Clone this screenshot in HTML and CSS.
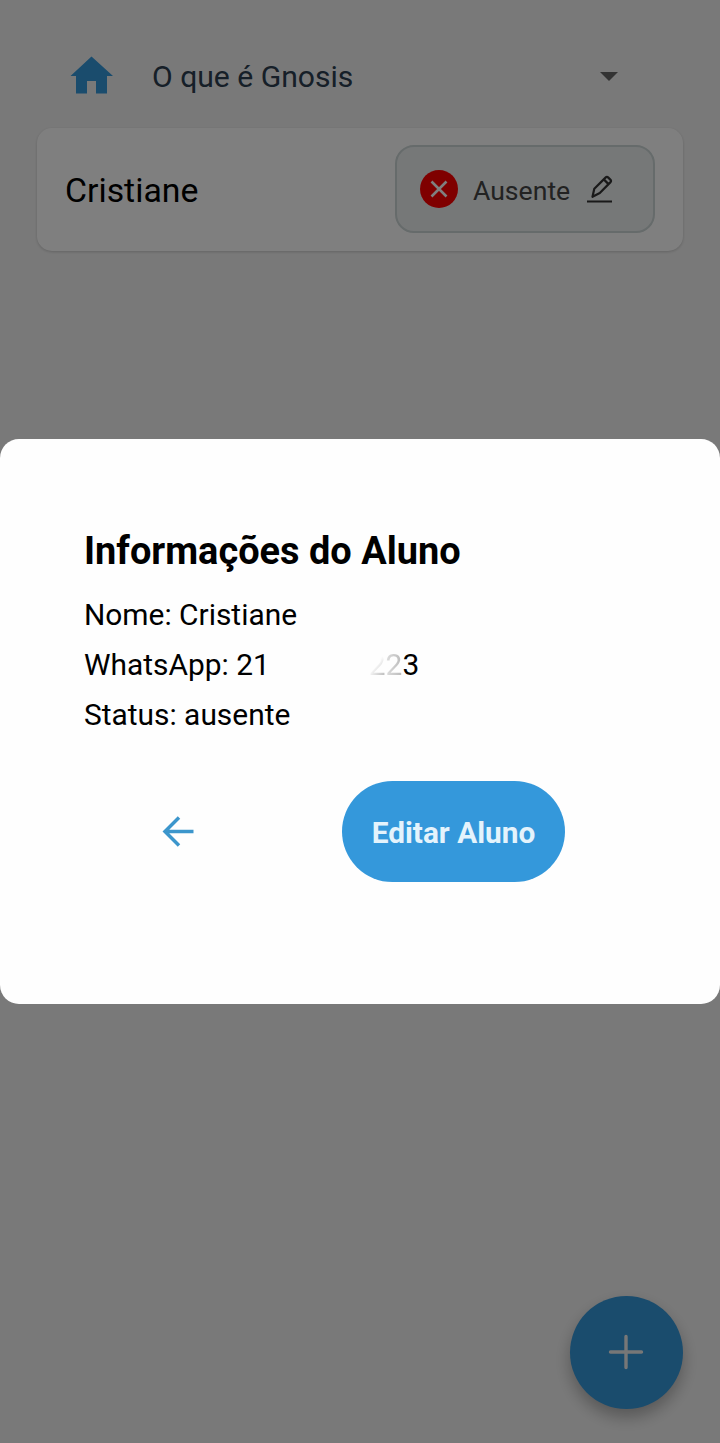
FILE: index.html
```html
<!DOCTYPE html>
<html lang="pt-BR">
<head>
<meta charset="utf-8">
<title>Informações do Aluno</title>
<link rel="stylesheet" href="styles.css">
</head>
<body>
<div class="screen">
  <header class="topbar">
    <svg class="home" viewBox="0 0 44 40"><path d="M21.500.5.500 20H6v17.500h11V25h9v12.500h11V20h6z"/></svg>
    <span class="course">O que é Gnosis</span>
    <svg class="caret" viewBox="0 0 18 9"><path d="M0 0h18L9 9z"/></svg>
  </header>
  <main class="card">
    <span class="student">Cristiane</span>
    <button class="status">
      <svg class="absent" viewBox="0 0 38 38"><circle cx="19" cy="19" r="19"/><path d="m11.500 11.500 15 15m0-15-15 15"/></svg>
      <span class="status-text">Ausente</span>
      <svg class="edit" viewBox="0 0 28 28"><path d="M1 26.500h25M6.500 21.800l1.800-8L19.500 2.600q1.400-1.400 2.800 0l2 2q1.400 1.400 0 2.800L13.800 18zM17.800 4.400l4.700 4.700"/></svg>
    </button>
  </main>
  <button class="add" aria-label="Adicionar">
    <svg viewBox="0 0 36 36"><path d="M2.500 18h31M18 2.500v31"/></svg>
  </button>
</div>
<div class="overlay">
  <section class="dialog">
    <h1 class="title">Informações do Aluno</h1>
    <p class="row">Nome: Cristiane</p>
    <p class="row">WhatsApp: 21<span class="masked"></span><span class="trace">2</span><span class="faded">2</span>3</p>
    <p class="row">Status: ausente</p>
    <div class="actions">
      <button class="back" aria-label="Voltar">
        <svg viewBox="0 0 32 32"><path d="M31.500 15.500H3M17 1.500l-14 14 14 14"/></svg>
      </button>
      <button class="primary">Editar Aluno</button>
    </div>
  </section>
</div>
</body>
</html>
```

FILE: styles.css
```css
* { box-sizing: border-box; }
body { margin: 0; font-family: Roboto, sans-serif; }
button { font: inherit; border: 0; padding: 0; margin: 0; }
svg { display: block; flex: none; }
.screen {
  position: relative;
  height: 1443px;
  padding: 25px 37px;
  background: #f3f3f3;
}
.topbar {
  display: flex;
  align-items: center;
  height: 103px;
  padding: 0 65px 1px 33px;
}
.home { width: 44px; height: 40px; fill: #3498db; }
.course { margin-left: 38px; font-size: 30.100px; color: #2c3e50; }
.caret { width: 18px; height: 9px; margin-left: auto; fill: #666; }
.card {
  display: flex;
  align-items: center;
  justify-content: space-between;
  height: 123px;
  padding: 0 28px 1px;
  border-radius: 15px;
  background: #fff;
  box-shadow: 0 1px 3px rgba(0, 0, 0, .18);
}
.student { font-size: 33.8px; color: #000; padding-top: 3px; }
.status {
  display: flex;
  align-items: center;
  width: 260px;
  height: 88px;
  padding: 0 23px;
  border: 2px solid #ccd6d6;
  border-radius: 19px;
  background: #ecf0f1;
}
.absent { width: 38px; height: 38px; }
.absent circle { fill: #f00; }
.absent path { stroke: #fff; stroke-width: 2.6; }
.status-text { margin-left: 15px; padding-top: 3px; font-size: 26.600px; color: #444; }
.edit {
  width: 28px;
  height: 28px;
  margin-left: 16px;
  fill: none;
  stroke: #333;
  stroke-width: 2.2;
  stroke-linejoin: round;
}
.add {
  position: absolute;
  right: 37px;
  bottom: 34px;
  display: grid;
  place-items: center;
  width: 113px;
  height: 113px;
  padding: 0 2px 2px 0;
  border-radius: 50%;
  background: #3498db;
  box-shadow: 0 8px 16px rgba(0, 0, 0, .28);
}
.add svg { width: 36px; height: 36px; stroke: #eee; stroke-width: 3.4; stroke-linecap: round; }
.overlay {
  position: absolute;
  inset: 0;
  display: flex;
  align-items: center;
  height: 1443px;
  background: rgba(0, 0, 0, .5);
}
.dialog {
  width: 720px;
  height: 565px;
  padding: 86px 84px 0;
  border-radius: 19px;
  background: #fefefe;
}
.title { margin: 0 0 13px; font-size: 37.950px; line-height: 52px; font-weight: 700; color: #000; }
.row { margin: 0; font-size: 29.900px; line-height: 50px; color: #000; white-space: nowrap; }
.masked { display: inline-block; width: 99px; }
.trace { color: transparent; background: linear-gradient(130deg, #fefefe 45%, #bbb 85%); background-clip: text; -webkit-background-clip: text; }
.faded { color: transparent; background: linear-gradient(90deg, #ddd, #bbb); background-clip: text; -webkit-background-clip: text; }
.actions {
  display: grid;
  grid-template-columns: 188px 223px;
  column-gap: 70px;
  align-items: center;
  margin-top: 41px;
}
.back { justify-self: center; background: none; }
.back svg { width: 32px; height: 32px; fill: none; stroke: #3c96cc; stroke-width: 3.5; }
.primary {
  height: 101px;
  padding-top: 2px;
  border-radius: 51px;
  background: #3498db;
  color: #e4f3fc;
  font-size: 29.800px;
  font-weight: 700;
}
```
